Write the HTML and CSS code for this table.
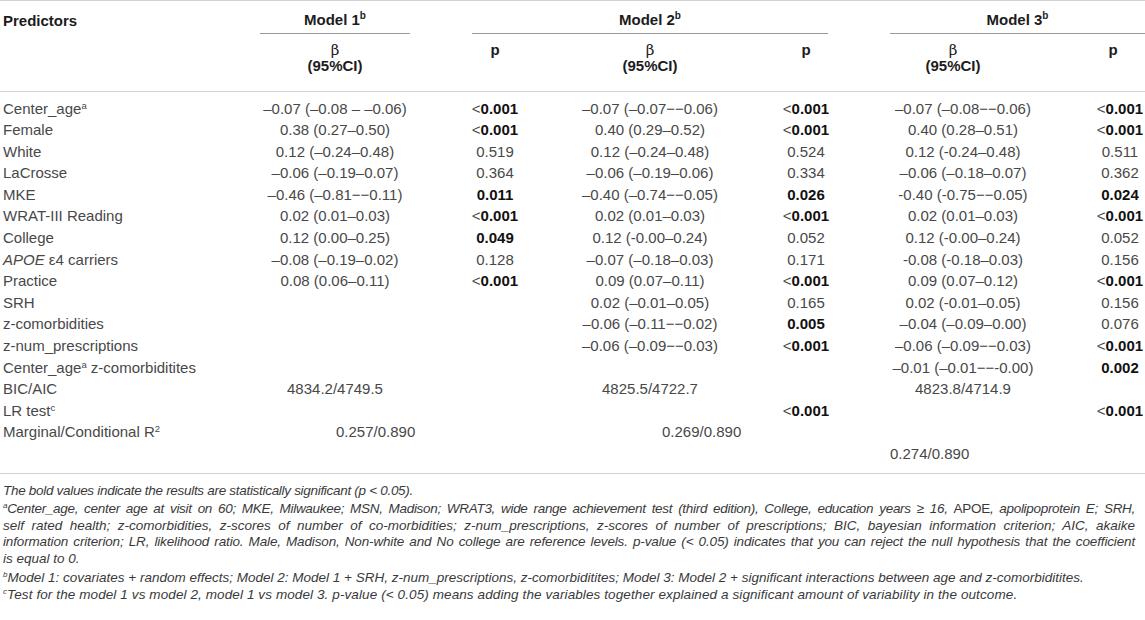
FILE: index.html
```html
<!DOCTYPE html>
<html>
<head>
<meta charset="utf-8">
<link rel="stylesheet" href="styles.css">
</head>
<body>
<div class="tbl">
  <div class="head1 row">
    <div class="c1 hd">Predictors</div>
    <div class="m1 hd model">Model 1<sup class="hsup">b</sup></div>
    <div class="m2 hd model">Model 2<sup class="hsup">b</sup></div>
    <div class="m3 hd model">Model 3<sup class="hsup">b</sup></div>
  </div>
  <div class="head2 row">
    <div class="c1"></div>
    <div class="b hd"><span class="beta">β</span><br>(95%CI)</div>
    <div class="p hd">p</div>
    <div class="b hd"><span class="beta">β</span><br>(95%CI)</div>
    <div class="p hd">p</div>
    <div class="b hd b3h"><span class="beta">β</span><br>(95%CI)</div>
    <div class="p hd p3h">p</div>
  </div>
  <div class="body">
    <div class="row">
      <div class="c1">Center_age<sup class="bsup">a</sup></div>
      <div class="b">–0.07 (–0.08 – –0.06)</div><div class="p">&lt;<b>0.001</b></div>
      <div class="b">–0.07 (–0.07−−0.06)</div><div class="p">&lt;<b>0.001</b></div>
      <div class="b">–0.07 (–0.08−−0.06)</div><div class="p p3">&lt;<b>0.001</b></div>
    </div>
    <div class="row">
      <div class="c1">Female</div>
      <div class="b">0.38 (0.27–0.50)</div><div class="p">&lt;<b>0.001</b></div>
      <div class="b">0.40 (0.29–0.52)</div><div class="p">&lt;<b>0.001</b></div>
      <div class="b">0.40 (0.28–0.51)</div><div class="p p3">&lt;<b>0.001</b></div>
    </div>
    <div class="row">
      <div class="c1">White</div>
      <div class="b">0.12 (–0.24–0.48)</div><div class="p">0.519</div>
      <div class="b">0.12 (–0.24–0.48)</div><div class="p">0.524</div>
      <div class="b">0.12 (-0.24–0.48)</div><div class="p p3">0.511</div>
    </div>
    <div class="row">
      <div class="c1">LaCrosse</div>
      <div class="b">–0.06 (–0.19–0.07)</div><div class="p">0.364</div>
      <div class="b">–0.06 (–0.19–0.06)</div><div class="p">0.334</div>
      <div class="b">–0.06 (–0.18–0.07)</div><div class="p p3">0.362</div>
    </div>
    <div class="row">
      <div class="c1">MKE</div>
      <div class="b">–0.46 (–0.81−−0.11)</div><div class="p"><b>0.011</b></div>
      <div class="b">–0.40 (–0.74−−0.05)</div><div class="p"><b>0.026</b></div>
      <div class="b">-0.40 (-0.75−−0.05)</div><div class="p p3"><b>0.024</b></div>
    </div>
    <div class="row">
      <div class="c1">WRAT-III Reading</div>
      <div class="b">0.02 (0.01–0.03)</div><div class="p">&lt;<b>0.001</b></div>
      <div class="b">0.02 (0.01–0.03)</div><div class="p">&lt;<b>0.001</b></div>
      <div class="b">0.02 (0.01–0.03)</div><div class="p p3">&lt;<b>0.001</b></div>
    </div>
    <div class="row">
      <div class="c1">College</div>
      <div class="b">0.12 (0.00–0.25)</div><div class="p"><b>0.049</b></div>
      <div class="b">0.12 (-0.00–0.24)</div><div class="p">0.052</div>
      <div class="b">0.12 (-0.00–0.24)</div><div class="p p3">0.052</div>
    </div>
    <div class="row">
      <div class="c1"><i>APOE</i> ε4 carriers</div>
      <div class="b">–0.08 (–0.19–0.02)</div><div class="p">0.128</div>
      <div class="b">–0.07 (–0.18–0.03)</div><div class="p">0.171</div>
      <div class="b">-0.08 (-0.18–0.03)</div><div class="p p3">0.156</div>
    </div>
    <div class="row">
      <div class="c1">Practice</div>
      <div class="b">0.08 (0.06–0.11)</div><div class="p">&lt;<b>0.001</b></div>
      <div class="b">0.09 (0.07–0.11)</div><div class="p">&lt;<b>0.001</b></div>
      <div class="b">0.09 (0.07–0.12)</div><div class="p p3">&lt;<b>0.001</b></div>
    </div>
    <div class="row">
      <div class="c1">SRH</div>
      <div class="b"></div><div class="p"></div>
      <div class="b">0.02 (–0.01–0.05)</div><div class="p">0.165</div>
      <div class="b">0.02 (-0.01–0.05)</div><div class="p p3">0.156</div>
    </div>
    <div class="row">
      <div class="c1">z-comorbidities</div>
      <div class="b"></div><div class="p"></div>
      <div class="b">–0.06 (–0.11−−0.02)</div><div class="p"><b>0.005</b></div>
      <div class="b">–0.04 (–0.09–0.00)</div><div class="p p3">0.076</div>
    </div>
    <div class="row">
      <div class="c1">z-num_prescriptions</div>
      <div class="b"></div><div class="p"></div>
      <div class="b">–0.06 (–0.09−−0.03)</div><div class="p">&lt;<b>0.001</b></div>
      <div class="b">–0.06 (–0.09−−0.03)</div><div class="p p3">&lt;<b>0.001</b></div>
    </div>
    <div class="row">
      <div class="c1">Center_age<sup class="bsup">a</sup> z-comorbiditites</div>
      <div class="b"></div><div class="p"></div>
      <div class="b"></div><div class="p"></div>
      <div class="b">–0.01 (–0.01−−-0.00)</div><div class="p p3"><b>0.002</b></div>
    </div>
    <div class="row">
      <div class="c1">BIC/AIC</div>
      <div class="b">4834.2/4749.5</div><div class="p"></div>
      <div class="b">4825.5/4722.7</div><div class="p"></div>
      <div class="b">4823.8/4714.9</div><div class="p p3"></div>
    </div>
    <div class="row">
      <div class="c1">LR test<sup class="bsup">c</sup></div>
      <div class="b"></div><div class="p"></div>
      <div class="b"></div><div class="p">&lt;<b>0.001</b></div>
      <div class="b"></div><div class="p p3">&lt;<b>0.001</b></div>
    </div>
    <div class="row">
      <div class="c1">Marginal/Conditional R<sup class="bsup r2">2</sup></div>
      <div class="b r2a">0.257/0.890</div><div class="p"></div>
      <div class="b r2b">0.269/0.890</div><div class="p"></div>
      <div class="b r2c">0.274/0.890</div><div class="p p3"></div>
    </div>
  </div>
</div>
<div class="notes">
  <p class="n1">The bold values indicate the results are statistically significant (p &lt; 0.05).</p>
  <p class="n2">
    <span class="ln jl tight"><sup>a</sup>Center_age, center age at visit on 60; MKE, Milwaukee; MSN, Madison; WRAT3, wide range achievement test (third edition), College, education years ≥ 16, <span class="up">APOE</span>, apolipoprotein E; SRH,</span>
    <span class="ln jl">self rated health; z-comorbidities, z-scores of number of co-morbidities; z-num_prescriptions, z-scores of number of prescriptions; BIC, bayesian information criterion; AIC, akaike</span>
    <span class="ln jl tight2">information criterion; LR, likelihood ratio. Male, Madison, Non-white and No college are reference levels. p-value (&lt; 0.05) indicates that you can reject the null hypothesis that the coefficient</span>
    <span class="ln">is equal to 0.</span>
  </p>
  <p class="n3"><sup>b</sup>Model 1: covariates + random effects; Model 2: Model 1 + SRH, z-num_prescriptions, z-comorbiditites; Model 3: Model 2 + significant interactions between age and z-comorbiditites.</p>
  <p class="n4"><sup>c</sup>Test for the model 1 vs model 2, model 1 vs model 3. p-value (&lt; 0.05) means adding the variables together explained a significant amount of variability in the outcome.</p>
</div>
</body>
</html>
```
FILE: styles.css
```css
html, body {
  margin: 0;
  padding: 0;
  background: #ffffff;
}
body {
  font-family: "Liberation Sans", Arial, Helvetica, sans-serif;
  color: #484848;
  width: 1145px;
  overflow: hidden;
}
.tbl {
  width: 1145px;
  border-top: 1px solid #d2d2d2;
}
.row {
  display: grid;
  grid-template-columns: 260px 150px 170px 140px 172px 142px 111px;
  white-space: nowrap;
}
.hd {
  font-weight: bold;
  color: #1c1c1c;
  font-size: 15px;
}
.c1 {
  padding-left: 3px;
  text-align: left;
}
.head1 {
  height: 33px;
}
.head1 .c1 {
  padding-top: 12px;
  line-height: 16px;
}
.model {
  text-align: center;
  line-height: 16px;
  padding-top: 11px;
  padding-bottom: 5px;
  border-bottom: 1px solid #9a9a9a;
}
.m1 { grid-column: 2 / 3; }
.m2 { grid-column: 3 / 6; margin-left: 62px; margin-right: 64px; }
.m3 { grid-column: 6 / 8; margin-left: -2px; }
.hsup {
  font-size: 10px;
  line-height: 0;
  vertical-align: 6px;
}
.head2 {
  padding-top: 8px;
  padding-bottom: 17px;
  border-bottom: 1px solid #d2d2d2;
  line-height: 16px;
}
.head2 .hd {
  text-align: center;
}
.beta {
  font-family: "DejaVu Serif", "Liberation Serif", serif;
  font-weight: normal;
  font-size: 15px;
}
.b3h { padding-right: 20px; }
.p3h { padding-left: 47px; }
.body {
  padding-top: 5.5px;
  padding-bottom: 8px;
  border-bottom: 1px solid #d2d2d2;
  font-size: 15px;
}
.body .row {
  line-height: 21.6px;
}
.b, .p {
  text-align: center;
}
.p3 {
  padding-left: 61px;
}
.body b {
  color: #111;
}
.bsup {
  font-size: 9.5px;
  line-height: 0;
  vertical-align: 5px;
}
.r2a {
  text-align: left;
  padding-left: 76px;
}
.r2b {
  text-align: left;
  padding-left: 82px;
}
.r2c {
  text-align: left;
  margin-left: -2px;
  padding-top: 21.6px;
}
.notes {
  padding: 9px 10px 0 3px;
  font-style: italic;
  font-size: 13.5px;
  line-height: 16.7px;
  color: #3a3a3a;
}
.notes p {
  margin: 0;
  white-space: nowrap;
}
.notes .n1 { margin-bottom: 1.5px; letter-spacing: -0.3px; }
.notes .n2 { margin-bottom: 2.5px; }
.notes .n4 { letter-spacing: 0.1px; }
.notes sup {
  font-size: 8px;
  line-height: 0;
  vertical-align: 5px;
}
.ln {
  display: block;
}
.jl {
  text-align: justify;
  text-align-last: justify;
}
.tight {
  letter-spacing: -0.3px;
}
.tight2 {
  letter-spacing: -0.15px;
}
.up {
  font-style: normal;
}
```
